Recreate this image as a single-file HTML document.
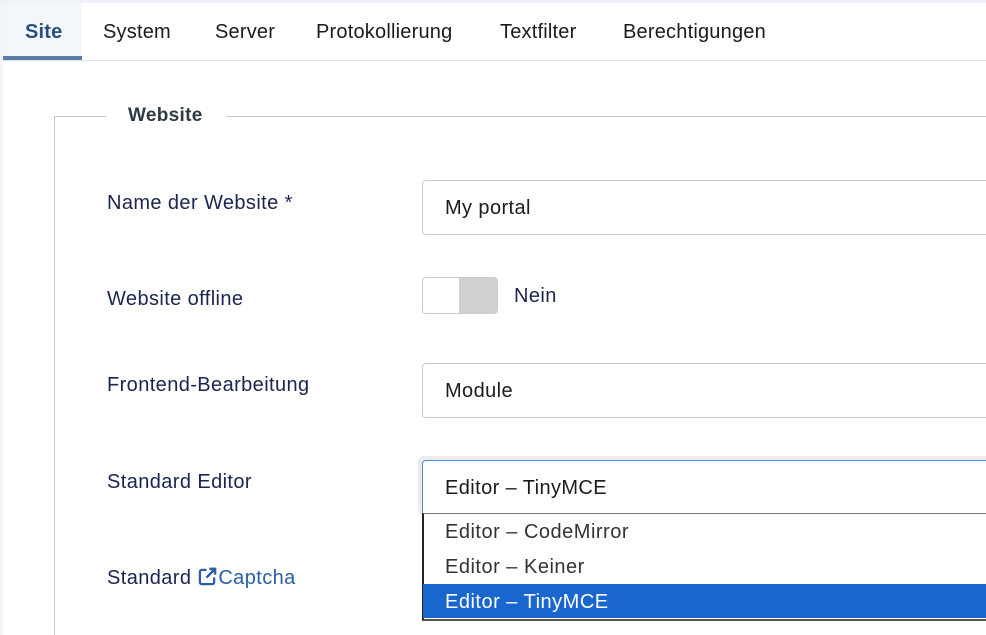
<!DOCTYPE html>
<html><head><meta charset="utf-8"><style>
*{margin:0;padding:0;box-sizing:border-box}
body{width:986px;height:635px;overflow:hidden;background:#fff;font-family:"Liberation Sans",Arial,sans-serif;position:relative}
.a{position:absolute}
.lbl{position:absolute;left:107px;font-size:20px;letter-spacing:0.4px;color:#1a2550}
.inp{position:absolute;left:422px;width:600px;border:1px solid #c4cdd6;border-radius:4px;background:#fff;font-size:20px;letter-spacing:0.4px;color:#1b1b1b;padding-left:22px}
.tab{position:absolute;top:21px;font-size:20px;letter-spacing:0.2px;color:#1b1b1b}
.opt{position:absolute;left:423px;width:600px;height:35px;font-size:20px;letter-spacing:0.5px;color:#333;padding-left:22px;line-height:37px}
</style></head><body>
<div class="a" style="left:0;top:0;width:986px;height:3px;background:#eef2f7"></div>
<div class="a" style="left:0;top:3px;width:3px;height:632px;background:#f3f5f8"></div>
<div class="a" style="left:3px;top:60px;width:983px;height:1px;background:#dfe3e8"></div>
<div class="a" style="left:3px;top:3px;width:79px;height:57px;background:#f3f6fa"></div>
<div class="a" style="left:3px;top:56px;width:79px;height:4px;background:#5a7ca6"></div>
<div class="tab" style="left:25px;color:#2a4f7d;font-weight:bold">Site</div>
<div class="tab" style="left:103px">System</div>
<div class="tab" style="left:215px">Server</div>
<div class="tab" style="left:316px">Protokollierung</div>
<div class="tab" style="left:500px">Textfilter</div>
<div class="tab" style="left:623px">Berechtigungen</div>

<div class="a" style="left:54px;top:116px;width:1px;height:519px;background:#c4cbd3"></div>
<div class="a" style="left:54px;top:116px;width:52px;height:1px;background:#c4cbd3"></div>
<div class="a" style="left:226px;top:116px;width:760px;height:1px;background:#c4cbd3"></div>
<div class="a" style="left:128px;top:105px;font-size:19px;letter-spacing:0.3px;font-weight:bold;color:#2e3a44">Website</div>

<div class="lbl" style="top:192px">Name der Website *</div>
<div class="inp" style="top:180px;height:55px;line-height:55px">My portal</div>

<div class="lbl" style="top:288px">Website offline</div>
<div class="a" style="left:422px;top:277px;width:76px;height:37px;border:1px solid #c4cdd6;border-radius:4px;background:#fff;overflow:hidden"><div style="position:absolute;left:36px;top:0;width:40px;height:37px;background:#d0d0d0"></div></div>
<div class="a" style="left:514px;top:285px;font-size:20px;letter-spacing:0.4px;color:#1a2550">Nein</div>

<div class="lbl" style="top:374px">Frontend-Bearbeitung</div>
<div class="inp" style="top:363px;height:55px;line-height:55px">Module</div>

<div class="lbl" style="top:471px">Standard Editor</div>
<div class="a" style="left:418px;top:456px;width:600px;height:60px;background:#ececec;border-radius:6px"></div>
<div class="inp" style="top:460px;height:54px;line-height:54px;border-color:#4a8ad6;border-bottom:none;border-radius:4px 4px 0 0">Editor – TinyMCE</div>
<div class="a" style="left:422px;top:513px;width:600px;height:108px;background:#fff;border-left:2px solid #222;border-top:1px solid #777;border-bottom:2px solid #555"></div>
<div class="opt" style="top:514px">Editor – CodeMirror</div>
<div class="opt" style="top:549px">Editor – Keiner</div>
<div class="opt" style="top:584px;background:#1a66cf;color:#fff;height:34px;line-height:36px">Editor – TinyMCE</div>

<div class="lbl" style="top:567px">Standard <svg width="19" height="19" viewBox="0 0 20 20" style="vertical-align:-2px;margin:0 1px"><path d="M9 3H4a2 2 0 0 0-2 2v11a2 2 0 0 0 2 2h11a2 2 0 0 0 2-2v-5" fill="none" stroke="#2a5ea8" stroke-width="2.4"/><path d="M12 2h6v6M18 2l-9 9" fill="none" stroke="#2a5ea8" stroke-width="2.6"/></svg><span style="color:#2a5ea8">Captcha</span></div>
</body></html>
